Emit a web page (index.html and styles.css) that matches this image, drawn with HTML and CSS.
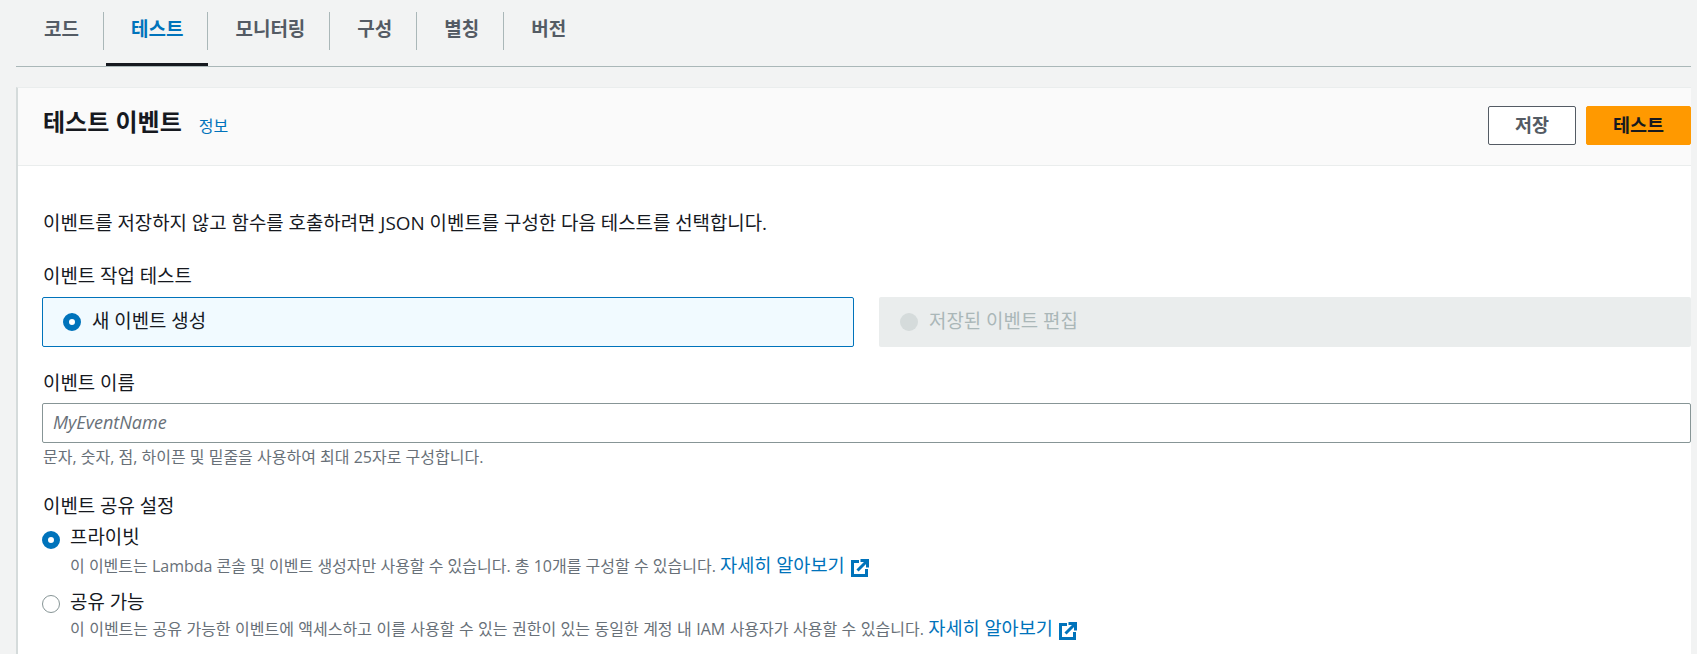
FILE: index.html
```html
<!DOCTYPE html>
<html lang="ko">
<head>
<meta charset="utf-8">
<title>테스트 이벤트</title>
<link rel="stylesheet" href="styles.css">
</head>
<body>
<div class="page">
  <nav class="tabs">
    <a class="tab">코드</a>
    <a class="tab active">테스트</a>
    <a class="tab">모니터링</a>
    <a class="tab">구성</a>
    <a class="tab">별칭</a>
    <a class="tab">버전</a>
  </nav>
  <section class="panel">
    <header class="panel-head">
      <div class="title-wrap">
        <h2 class="title">테스트 이벤트</h2>
        <a class="info">정보</a>
      </div>
      <div class="actions">
        <button class="btn">저장</button>
        <button class="btn primary">테스트</button>
      </div>
    </header>
    <div class="panel-body">
      <p class="intro">이벤트를 저장하지 않고 함수를 호출하려면 JSON 이벤트를 구성한 다음 테스트를 선택합니다.</p>
      <div class="label l-action">이벤트 작업 테스트</div>
      <div class="tiles">
        <div class="tile selected"><span class="radio on"></span><span class="tile-text">새 이벤트 생성</span></div>
        <div class="tile disabled"><span class="radio off"></span><span class="tile-text">저장된 이벤트 편집</span></div>
      </div>
      <div class="label l-name">이벤트 이름</div>
      <div class="input"><span class="placeholder">MyEventName</span></div>
      <div class="hint">문자, 숫자, 점, 하이픈 및 밑줄을 사용하여 최대 25자로 구성합니다.</div>
      <div class="label l-share">이벤트 공유 설정</div>
      <div class="option">
        <span class="radio on"></span>
        <div>
          <div class="opt-label">프라이빗</div>
          <div class="opt-desc">이 이벤트는 Lambda 콘솔 및 이벤트 생성자만 사용할 수 있습니다. 총 10개를 구성할 수 있습니다. <a class="link">자세히 알아보기<svg class="ext" viewBox="0 0 18 18"><path d="M8 2.5H1.5v14h14V10" fill="none" stroke="#0073bb" stroke-width="3"/><path d="M6.5 11.5L15 3M9.5 1.5h7v7" fill="none" stroke="#0073bb" stroke-width="3"/></svg></a></div>
        </div>
      </div>
      <div class="option second">
        <span class="radio blank"></span>
        <div>
          <div class="opt-label">공유 가능</div>
          <div class="opt-desc">이 이벤트는 공유 가능한 이벤트에 액세스하고 이를 사용할 수 있는 권한이 있는 동일한 계정 내 IAM 사용자가 사용할 수 있습니다. <a class="link">자세히 알아보기<svg class="ext" viewBox="0 0 18 18"><path d="M8 2.5H1.5v14h14V10" fill="none" stroke="#0073bb" stroke-width="3"/><path d="M6.5 11.5L15 3M9.5 1.5h7v7" fill="none" stroke="#0073bb" stroke-width="3"/></svg></a></div>
        </div>
      </div>
    </div>
  </section>
</div>
</body>
</html>
```
FILE: styles.css
```css
* { box-sizing: border-box; }
html, body { margin: 0; height: 654px; overflow: hidden; }
body {
  background: #f2f3f3;
  color: #16191f;
  font-family: "Open Sans", "Noto Sans CJK KR", sans-serif;
  font-size: 18.9px;
}
.page { padding: 0 6px 0 16px; }
.tabs {
  display: flex;
  height: 67px;
  padding-top: 12px;
  border-bottom: 1px solid #aab7b8;
  align-items: flex-start;
}
.tab {
  height: 38px;
  line-height: 34px;
  padding: 0 24px 0 27px;
  font-size: 19px;
  font-weight: 700;
  color: #545b64;
  border-right: 1px solid #aab7b8;
  position: relative;
}
.tab:first-child { padding-left: 28px; }
.tab:last-child { border-right: 0; }
.tab.active { color: #0073bb; }
.tab.active::after {
  content: "";
  position: absolute;
  left: 2px;
  right: -1px;
  top: 51px;
  height: 3px;
  background: #16191f;
}
.panel {
  margin-top: 20px;
  background: #fff;
  border-left: 2px solid #d5dbdb;
  border-top: 1px solid #eaeded;
  height: 567px;
  overflow: hidden;
}
.panel-head {
  height: 78px;
  background: #fafafa;
  border-bottom: 1px solid #eaeded;
  padding: 18px 0 0 25px;
  display: flex;
  justify-content: space-between;
  align-items: flex-start;
}
.title-wrap { display: flex; align-items: flex-start; gap: 17px; margin-top: 1px; }
.title { margin: 0; font-size: 24px; line-height: 30px; font-weight: 700; }
.info { font-size: 16px; line-height: 30px; margin-top: 4px; color: #0073bb; }
.actions { display: flex; gap: 10px; }
.btn {
  width: 88px;
  height: 39px;
  border: 1px solid #545b64;
  border-radius: 2px;
  background: #fff;
  color: #545b64;
  font: 700 18.5px "Open Sans", "Noto Sans CJK KR", sans-serif;
  padding: 0 0 4px;
}
.btn.primary {
  width: 105px;
  background: #ff9900;
  border-color: #ff9900;
  color: #16191f;
}
.panel-body { padding: 0 0 0 25px; }
.intro { margin: 0; padding-top: 44px; line-height: 26px; }
.label { line-height: 24px; }
.l-action { margin-top: 28px; }
.tiles { display: flex; gap: 25px; margin: 9px 0 0 -1px; }
.tile {
  flex: 1;
  height: 50px;
  display: flex;
  align-items: center;
  gap: 11px;
  padding: 0 0 3px 20px;
  border-radius: 2px;
  border: 1px solid transparent;
}
.tile-text { margin-top: -2px; }
.tile.selected { background: #f1faff; border-color: #0073bb; }
.tile.disabled { background: #eaeded; color: #aab7b8; }
.radio {
  flex: none;
  display: inline-block;
  width: 18px;
  height: 18px;
  border-radius: 50%;
}
.tile .radio { margin-top: 3px; }
.radio.on { background: #fff; border: 6px solid #0073bb; }
.radio.off { background: #d5dbdb; }
.radio.blank { background: #fff; border: 1px solid #879596; }
.l-name { margin-top: 24px; }
.input {
  margin: 8px 0 0 -1px;
  height: 40px;
  border: 1px solid #879596;
  border-radius: 2px;
  padding: 0 10px;
  line-height: 36px;
}
.placeholder { font-size: 18px; font-style: italic; color: #687078; }
.hint { font-size: 16px; line-height: 20px; color: #687078; margin-top: 4px; }
.l-share { margin-top: 27px; }
.option { display: flex; gap: 10px; margin: 7px 0 0 -1px; }
.option .radio { margin-top: 6px; }
.option.second { margin-top: 13px; }
.option.second .radio { margin-top: 5px; }
.opt-label { line-height: 24px; }
.opt-desc { font-size: 16px; line-height: 22px; color: #687078; margin-top: 5px; }
.second .opt-desc { margin-top: 3px; word-spacing: .3px; }
.link { font-size: 18.6px; color: #0073bb; word-spacing: 0; }
.ext { width: 18px; height: 18px; margin-left: 6px; vertical-align: -5px; }
```
